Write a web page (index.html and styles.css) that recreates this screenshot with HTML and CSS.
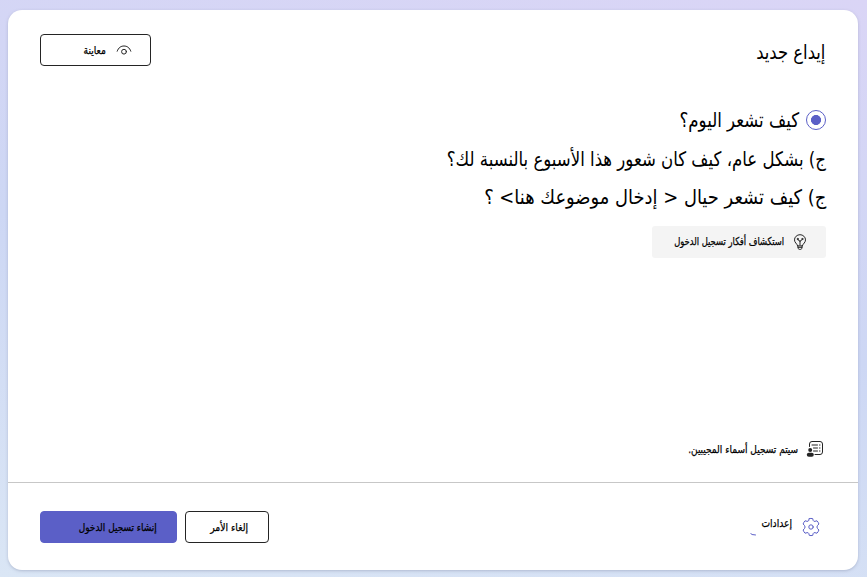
FILE: index.html
```html
<!DOCTYPE html>
<html lang="ar" dir="rtl">
<head>
<meta charset="utf-8">
<title>إيداع جديد</title>
<link rel="stylesheet" href="styles.css">
</head>
<body>
<main class="card">
  <header class="header">
    <h1 class="text title">إيداع جديد</h1>
    <button class="btn preview">
      <svg class="eye" viewBox="0 0 16 16"><path d="M1.200 9.200C2.500 5.500 5 4 8 4s5.500 1.500 6.800 5.200"/><circle cx="8" cy="9.700" r="2.400"/></svg>
      <span class="text preview-text">معاينة</span>
    </button>
  </header>
  <section class="questions">
    <label class="row"><span class="radio"></span><span class="text q1">كيف تشعر اليوم؟</span></label>
    <div class="row"><span class="text q2">ج) بشكل عام، كيف كان شعور هذا الأسبوع بالنسبة لك؟</span></div>
    <div class="row"><span class="text q3">ج) كيف تشعر حيال &lt; إدخال موضوعك هنا&gt; ؟</span></div>
    <button class="ideas">
      <svg class="bulb" viewBox="0 0 16 16"><path d="M5.500 11.500C5 9.500 2.500 8.700 2.500 5.900a5.500 5.200 0 0 1 11 0c0 2.800-2.500 3.600-3 5.600zM5.700 11.500l.6 3q.2.900 1.200.9h1q1 0 1.200-.9l.6-3M6 13.300h4M8 11V6.500M5.800 5.500L8 7.500l2.200-2"/><circle cx="5.700" cy="5" r=".6"/><circle cx="10.300" cy="5" r=".6"/></svg>
      <span class="text ideas-text">استكشاف أفكار تسجيل الدخول</span>
    </button>
  </section>
  <div class="notice">
    <svg class="list" viewBox="0 0 18 18"><path d="M3.500 6.500V4q0-2.500 2.500-2.500h8q2.500 0 2.500 2.500v8q0 2.500-2.500 2.500H9M6 5h5.500M7.500 8h4M7.500 11h4M13.500 5h.5M13.500 8h.5M13.500 11h.5"/><g class="person"><circle cx="4.200" cy="10" r="2"/><rect x=".8" y="12.700" width="7" height="4" rx="2"/></g></svg>
    <span class="text notice-text">سيتم تسجيل أسماء المجيبين.</span>
  </div>
  <footer class="footer">
    <div class="settings">
      <svg class="gear" viewBox="0 0 20 20"><path d="M8.300 1.600Q10 1.200 11.700 1.600L12.200 3.500Q12.700 4.700 14 4.300L16 3.800Q17.300 5.200 17.900 7L16.500 8.500Q15.300 10 16.500 11.500L17.900 13Q17.300 14.800 16 16.200L14 15.700Q12.700 15.300 12.200 16.500L11.700 18.400Q10 18.800 8.300 18.400L7.800 16.500Q7.300 15.300 6 15.700L4 16.200Q2.700 14.800 2.100 13L3.500 11.500Q4.700 10 3.500 8.500L2.100 7Q2.700 5.200 4 3.800L6 4.300Q7.300 4.700 7.800 3.500Z"/><circle cx="10" cy="10" r="2.200"/></svg>
      <span class="text settings-text">إعدادات</span>
      <svg class="arc" viewBox="0 0 6 3"><path d="M.5.500Q1 2 5.500 2"/></svg>
    </div>
    <div class="actions">
      <button class="btn cancel"><span class="text cancel-text">إلغاء الأمر</span></button>
      <button class="btn create"><span class="text create-text">إنشاء تسجيل الدخول</span></button>
    </div>
  </footer>
</main>
</body>
</html>
```
FILE: styles.css
```css
* { box-sizing: border-box; }
body { margin: 0; height: 577px; padding: 10px 9px 7px 8px; overflow: hidden; background: linear-gradient(10deg, #dae6f5, #cdd7f4 50%, #dad5f6); font-family: "DejaVu Sans", sans-serif; color: #000; }
button { font: inherit; color: inherit; }
svg { fill: none; stroke: #252525; stroke-width: 1; flex: none; stroke-linejoin: round; stroke-linecap: round; }
.card { display: flex; flex-direction: column; height: 560px; background: #fff; border-radius: 14px; box-shadow: 0 1px 3px #8892b080; }
.header { display: flex; justify-content: space-between; align-items: flex-start; padding: 24px 33px 0 32px; height: 91px; }
.text { display: block; white-space: nowrap; transform-origin: right center; flex: none; }
.title { margin: 5px 0 0; font-size: 20px; font-weight: 400; line-height: 26px; transform: scaleX(.82); }
.btn { display: flex; align-items: center; height: 32px; border: 1px solid #242424; border-radius: 4px; background: #fff; padding: 0; }
.btn, .ideas, .notice, .settings { font-size: 11px; -webkit-text-stroke: .25px #000; }
.preview { width: 111px; padding-right: 18px; gap: 10px; }
.preview-text { transform: scaleX(.83); }
.eye { width: 16px; height: 16px; }
.questions { height: 330px; padding: 0 32px; font-size: 20px; }
.row { display: flex; align-items: center; height: 38.500px; gap: 7px; }
.q1 { transform: scaleX(.83); }
.q2 { transform: scaleX(.828); }
.q3 { transform: scaleX(.895); }
.radio { width: 20px; height: 20px; flex: none; border: 1px solid #5b5fc7; border-radius: 50%; background: radial-gradient(circle, #5b5fc7 4.700px, #fff 5.300px); }
.ideas { display: flex; align-items: center; width: 174px; height: 32px; margin-top: 9px; padding: 0 18px 0 0; gap: 8px; border: 0; border-radius: 3px; background: #f4f4f4; }
.ideas-text { transform: scaleX(.763); }
.bulb { width: 16px; height: 16px; }
.notice { display: flex; align-items: center; gap: 8px; height: 36px; padding-right: 34px; }
.notice-text { transform: scaleX(.82); }
.list { width: 18px; height: 18px; }
.person { fill: #252525; stroke: none; }
.footer { display: flex; justify-content: space-between; height: 88px; margin-top: 15px; border-top: 1px solid #c7c7c7; padding: 28px 37px 0 32px; }
.settings { display: flex; align-items: center; height: 32px; gap: 9px; }
.settings-text { width: 31px; margin-bottom: 7px; transform: scaleX(.83); }
.gear { width: 20px; height: 20px; stroke: #5b5fc7; }
.arc { width: 6px; height: 3px; margin: 15px -4px 0 0; stroke: #5b5fc7; }
.actions { display: flex; gap: 8px; }
.cancel { width: 84px; padding-right: 20px; }
.cancel-text { transform: scaleX(.84); }
.create { width: 137px; padding-right: 19px; border-color: #5b5fc7; background: #5b5fc7; }
.create-text { transform: scaleX(.815); }
```
